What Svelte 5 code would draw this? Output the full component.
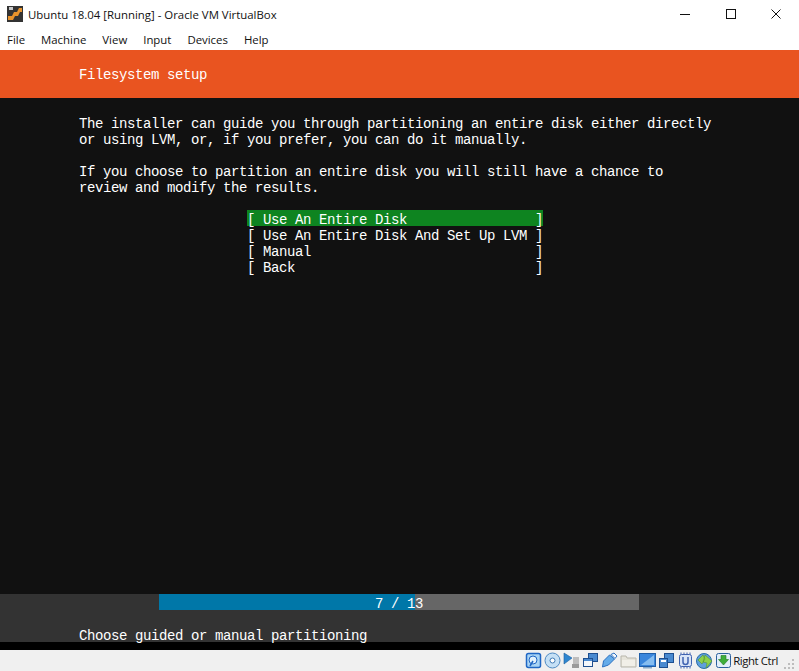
<script>
	const menus = ['File', 'Machine', 'View', 'Input', 'Devices', 'Help'];
	const options = [
		{ label: 'Use An Entire Disk', selected: true },
		{ label: 'Use An Entire Disk And Set Up LVM' },
		{ label: 'Manual' },
		{ label: 'Back' }
	];
	const done = 7;
	const total = 13;
	const barWidth = 256;
</script>

<div class="window">
	<header class="titlebar">
		<svg class="logo" width="16" height="16" viewBox="0 0 16 16">
			<rect width="16" height="16" fill="#333" />
			<path d="M1 10h4l2-4h3l2-4h3v4h-2l-2 4H8l-2 4H1z" fill="#e8932c" />
			<path d="M2 1h4v3H2z" fill="#c9c9c9" />
		</svg>
		<span class="title">Ubuntu 18.04 [Running] - Oracle VM VirtualBox</span>
		<div class="controls">
			<svg width="10" height="10" viewBox="0 0 10 10"><path d="M0 5.500h10" stroke="#111" /></svg>
			<svg width="10" height="10" viewBox="0 0 10 10"><rect x=".5" y=".5" width="9" height="9" fill="none" stroke="#111" /></svg>
			<svg width="10" height="10" viewBox="0 0 10 10"><path d="M.5 .5l9 9M9.500 .5l-9 9" stroke="#111" /></svg>
		</div>
	</header>

	<nav class="menubar">
		{#each menus as menu}
			<span>{menu}</span>
		{/each}
	</nav>

	<main class="screen">
		<div class="banner">Filesystem setup</div>

		<section class="content">
			<p>The installer can guide you through partitioning an entire disk either directly
or using LVM, or, if you prefer, you can do it manually.</p>
			<p>If you choose to partition an entire disk you will still have a chance to
review and modify the results.</p>

			<div class="options">
				{#each options as option}
					<div class="option" class:selected={option.selected}>
						<span>[ {option.label}</span>
						<span>]</span>
					</div>
				{/each}
			</div>
		</section>

		<footer class="footer">
			<div class="progress">
				<div class="fill" style:width="{barWidth}px"></div>
				<span class="count">{done} / {total}</span>
			</div>
			<div class="hint">Choose guided or manual partitioning</div>
		</footer>
	</main>

	<div class="statusbar">
		<svg width="17" height="17" viewBox="0 0 17 17"><rect x="1.500" y="1.500" width="14" height="14" rx="2" fill="#a9d4f5" stroke="#1f66c4" stroke-width="1.500" /><circle cx="8" cy="8" r="4" fill="#e4f2fc" stroke="#1f66c4" /><path d="M8 9l-3 5" stroke="#1f66c4" stroke-width="1.500" /></svg>
		<svg width="17" height="17" viewBox="0 0 17 17"><circle cx="8.500" cy="8.500" r="7.500" fill="#c5e0f5" stroke="#4f8ac2" /><circle cx="8.500" cy="8.500" r="2.500" fill="#fff" stroke="#3f7ab5" /></svg>
		<svg width="17" height="17" viewBox="0 0 17 17"><path d="M1 1l8 5-8 6z" fill="#2e86d0" stroke="#1c5fa0" stroke-width=".6" /><rect x="10" y="5" width="6" height="7" fill="#bdbdbd" /><rect x="9" y="12" width="7" height="4" fill="#9a9a9a" /></svg>
		<svg width="17" height="17" viewBox="0 0 17 17"><rect x="6.500" y="1.500" width="9" height="8" fill="#4a8ad0" stroke="#1e4f90" /><rect x="1.500" y="6.500" width="9" height="8" fill="#f3f7fb" stroke="#1e4f90" /><rect x="2" y="7" width="8" height="2" fill="#4a8ad0" /></svg>
		<svg width="17" height="17" viewBox="0 0 17 17"><path d="M1.500 15l1-6 6-6 5 4-6 6z" fill="#63abe9" stroke="#2a6fc0" /><path d="M10 2.500l3-1.500 3 3-2 2.500z" fill="#f2f6fb" stroke="#2a6fc0" /></svg>
		<svg width="17" height="17" viewBox="0 0 17 17"><path d="M1 4h5l1 2h9v9H1z" fill="#e6e4db" stroke="#b8b6ac" /><path d="M2 8h13v6H2z" fill="#f1efe8" /></svg>
		<svg width="17" height="17" viewBox="0 0 17 17"><rect x=".5" y="1.500" width="16" height="13" fill="#3a86dc" stroke="#1f5ea8" /><path d="M2 13L15 3v10z" fill="#86bdf0" /><rect x="4" y="15" width="9" height="1.500" fill="#8aa9c9" /></svg>
		<svg width="17" height="17" viewBox="0 0 17 17"><rect x="6.500" y="1.500" width="9" height="9" fill="#4a8ad0" stroke="#1e4f90" /><rect x="1.500" y="6.500" width="8" height="9" fill="#4a8ad0" stroke="#1e4f90" /><rect x="3" y="8" width="5" height="2" fill="#fff" /></svg>
		<svg width="17" height="17" viewBox="0 0 17 17"><rect x="2.500" y="2.500" width="12" height="12" rx="2" fill="#d8e4f7" stroke="#3f62b0" /><path d="M4 .5v2M7 .5v2M10 .5v2M13 .5v2M4 14.500v2M7 14.500v2M10 14.500v2M13 14.500v2" stroke="#3f62b0" /><path d="M6 5v5a2.500 2.500 0 0 0 5 0V5" fill="none" stroke="#3f62b0" stroke-width="1.500" /></svg>
		<svg width="17" height="17" viewBox="0 0 17 17"><circle cx="8" cy="9" r="7.500" fill="#5f9fdc" stroke="#2a6ea8" /><path d="M2 8l5-5 2 4-3 5zM9 3l7 6-6 7 1-5-4-1z" fill="#8ed04c" stroke="#4f8f24" stroke-width=".5" /></svg>
		<svg width="17" height="17" viewBox="0 0 17 17"><rect x="1.500" y="1.500" width="14" height="14" rx="2" fill="#e2eef9" stroke="#2a5f9e" /><path d="M6 3.500h5v4h2.500l-5 5.500-5-5.500H6z" fill="#3fae3a" stroke="#1e7a20" stroke-width=".6" /></svg>
		<span class="hostkey">Right Ctrl</span>
		<svg class="grip" width="11" height="11" viewBox="0 0 11 11" fill="#bdbdbd"><rect x="8" y="0" width="2" height="2" /><rect x="4" y="4" width="2" height="2" /><rect x="8" y="4" width="2" height="2" /><rect x="0" y="8" width="2" height="2" /><rect x="4" y="8" width="2" height="2" /><rect x="8" y="8" width="2" height="2" /></svg>
	</div>
</div>

<style>
	:global(body) {
		margin: 0;
		background: #f0f0f0;
	}

	.window {
		width: 799px;
		height: 671px;
		display: flex;
		flex-direction: column;
		overflow: hidden;
		font-family: 'Open Sans', 'Liberation Sans', sans-serif;
		font-size: 11.4px;
		color: #111;
	}

	.titlebar {
		height: 28px;
		flex: none;
		display: flex;
		align-items: center;
		padding-left: 7px;
		background: #fff;
	}

	.title {
		margin-left: 5px;
	}

	.controls {
		margin-left: auto;
		display: flex;
		gap: 35.500px;
		padding-right: 18px;
	}

	.menubar {
		height: 22px;
		flex: none;
		display: flex;
		align-items: center;
		gap: 16px;
		padding-left: 7px;
		background: #fff;
	}

	.screen {
		height: 600px;
		flex: none;
		display: flex;
		flex-direction: column;
		background: #111111;
		color: #fff;
		font-family: 'Liberation Mono', 'DejaVu Sans Mono', monospace;
		font-size: 14px;
		line-height: 16px;
		letter-spacing: -0.400px;
	}

	.banner {
		height: 48px;
		flex: none;
		display: flex;
		align-items: center;
		padding: 2px 0 0 79px;
		box-sizing: border-box;
		background: #e95420;
	}

	.content {
		flex: 1;
		padding: 18px 0 0 79px;
	}

	p {
		margin: 0;
		white-space: pre;
	}

	p + p {
		margin-top: 16px;
	}

	.options {
		width: 296px;
		margin: 14px 0 0 168px;
		white-space: pre;
	}

	/* text sits a little low in its row, like the console cells */
	.option {
		display: flex;
		justify-content: space-between;
		height: 16px;
		line-height: 20px;
	}

	.selected {
		background: #0e8420;
	}

	.footer {
		height: 48px;
		flex: none;
		background: #333333;
		border-bottom: 8px solid #000;
	}

	.progress {
		position: relative;
		width: 480px;
		height: 16px;
		margin-left: 159px;
		background: #666666;
		line-height: 20px;
		text-align: center;
	}

	.fill {
		position: absolute;
		inset: 0 auto 0 0;
		background: #0077a8;
	}

	.count {
		position: relative;
	}

	.hint {
		height: 16px;
		margin: 16px 0 0 79px;
		line-height: 20px;
	}

	.statusbar {
		flex: 1;
		display: flex;
		align-items: center;
		justify-content: flex-end;
		gap: 2px;
		padding-right: 4px;
		background: #f0f0f0;
	}

	.hostkey {
		margin-left: -1px;
		letter-spacing: -0.400px;
	}

	.grip {
		align-self: flex-end;
		margin: 0 0 1px 4px;
	}
</style>
